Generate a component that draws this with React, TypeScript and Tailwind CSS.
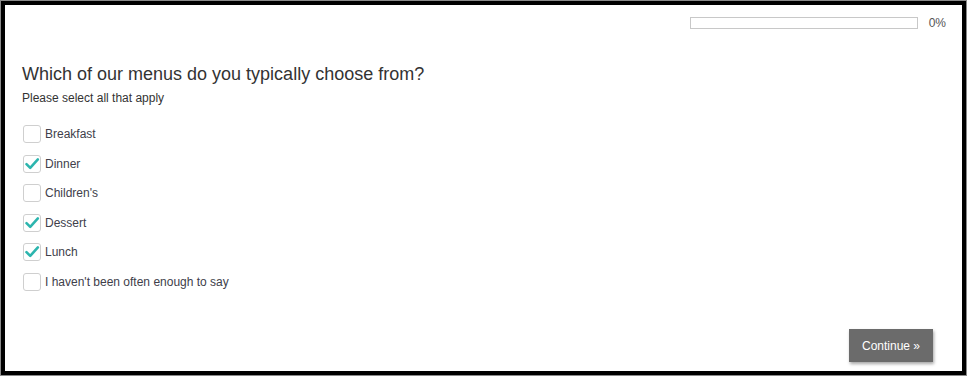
const options = [
  { label: "Breakfast", checked: false },
  { label: "Dinner", checked: true },
  { label: "Children's", checked: false },
  { label: "Dessert", checked: true },
  { label: "Lunch", checked: true },
  { label: "I haven't been often enough to say", checked: false },
];

function CheckBox({ checked }: { checked: boolean }) {
  return (
    <span className="relative flex h-[18px] w-[18px] shrink-0 items-center justify-center rounded-[3px] border border-[#cfcfcf] bg-white">
      {checked && (
        <svg viewBox="0 0 18 18" className="h-[18px] w-[18px]">
          <path
            d="M2.8 9.2 L7 13.4 L15.6 3.8"
            fill="none"
            stroke="#2cb5ae"
            strokeWidth="2.9"
            strokeLinecap="round"
            strokeLinejoin="round"
          />
        </svg>
      )}
    </span>
  );
}

export default function App() {
  return (
    <div
      className="h-[376px] w-[967px] bg-[#8a8a8a] p-px"
      style={{ fontFamily: '"Liberation Sans", Arial, sans-serif' }}
    >
      <div className="flex h-full flex-col border-4 border-black bg-white pl-[17px]">
        <div className="mt-[12px] flex items-center justify-end pr-[16px]">
          <div className="h-[12px] w-[228px] border border-[#c8c8c8] bg-white" />
          <span className="ml-[11px] text-[12px] leading-none text-[#555]">0%</span>
        </div>

        <h1 className="mt-[34px] text-[18px] leading-[22px] text-[#333]">
          Which of our menus do you typically choose from?
        </h1>
        <p className="mt-[5px] text-[12px] leading-[16px] text-[#333]">
          Please select all that apply
        </p>

        <ul className="mt-[19px] flex flex-col gap-[11.6px] pl-px">
          {options.map((o) => (
            <li key={o.label} className="flex h-[18px] items-center gap-[4px]">
              <CheckBox checked={o.checked} />
              <span className="text-[12px] leading-none text-[#40404a]">{o.label}</span>
            </li>
          ))}
        </ul>

        <div className="mt-auto mb-[9px] mr-[29px] flex justify-end">
          <button className="h-[33px] w-[84px] bg-[#6b6b6b] text-[12px] text-white shadow-[1px_2px_3px_rgba(0,0,0,0.35)]">
            Continue »
          </button>
        </div>
      </div>
    </div>
  );
}
